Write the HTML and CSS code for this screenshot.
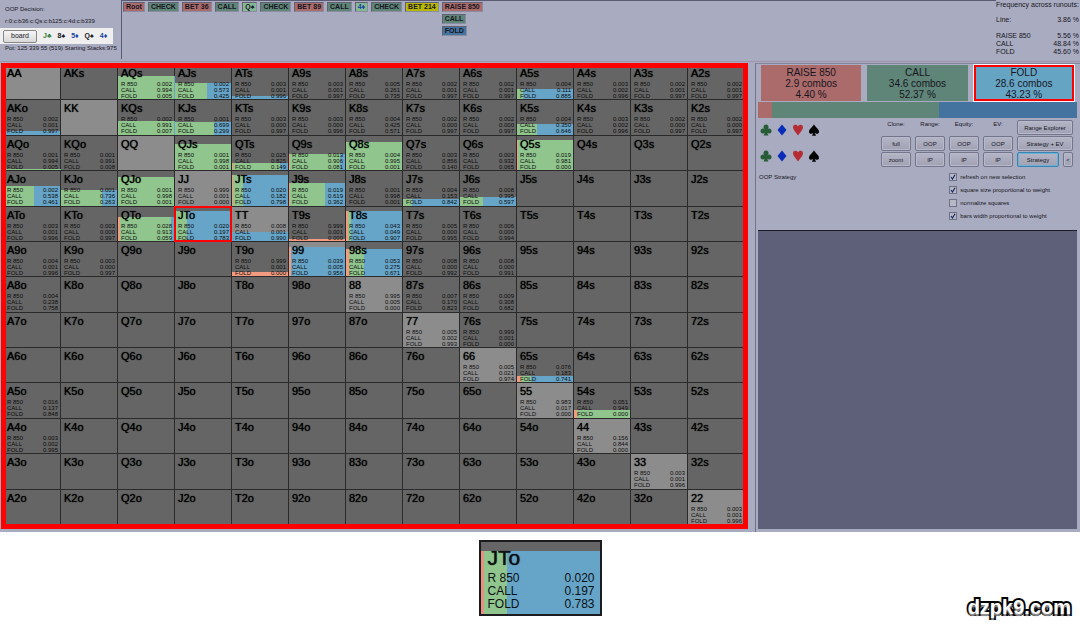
FILE: index.html
```html
<!DOCTYPE html>
<html lang="en">
<head>
<meta charset="utf-8">
<title>OOP Strategy</title>
<link rel="stylesheet" href="styles.css">
</head>
<body>
<svg class="defs" aria-hidden="true">
  <symbol id="club" viewBox="0 0 12 12"><circle cx="6" cy="3" r="2.5"/><circle cx="3" cy="7" r="2.5"/><circle cx="9" cy="7" r="2.5"/><path d="M5 5h2l.3 4L8.500 11.500H3.500L4.700 9z"/></symbol>
  <symbol id="diamond" viewBox="0 0 12 12"><path d="M6 0.500L10.500 6 6 11.500 1.500 6z"/></symbol>
  <symbol id="heart" viewBox="0 0 12 12"><path d="M6 11.500C4 8.500 1 6 1 3.300 1 .4 5 0 6 2.600 7 0 11 .4 11 3.300 11 6 8 8.500 6 11.500z"/></symbol>
  <symbol id="spade" viewBox="0 0 12 12"><path d="M6 .3C7 2.800 11 5 11 7.700c0 2.400-3 2.800-4.300 1L8 11.700H4L5.300 8.700C4 10.500 1 10.100 1 7.700 1 5 5 2.800 6 .3z"/></symbol>
</svg>
<div class="app">
  <header class="top">
    <section class="decision">
      <p>OOP Decision:</p>
      <p class="path">r:0:c:b36:c:Qs:c:b125:c:4d:c:b339</p>
      <div class="cards">
        <button type="button" class="btn">board</button>
        <span class="green">J♣</span><span>8♠</span><span class="blue">5♦</span><span>Q♠</span><span class="blue">4♦</span>
      </div>
      <p>Pot: 125 339 55 (519) Starting Stacks:975</p>
    </section>
    <nav class="line">
      <button type="button" class="tag raise">Root</button>
      <button type="button" class="tag call">CHECK</button>
      <button type="button" class="tag raise">BET 36</button>
      <button type="button" class="tag call">CALL</button>
      <button type="button" class="tag card">Q♠</button>
      <button type="button" class="tag call">CHECK</button>
      <button type="button" class="tag raise">BET 89</button>
      <button type="button" class="tag call">CALL</button>
      <button type="button" class="tag card blue">4♦</button>
      <button type="button" class="tag call">CHECK</button>
      <button type="button" class="tag current">BET 214</button>
      <div class="options">
        <button type="button" class="tag raise">RAISE 850</button>
        <button type="button" class="tag call">CALL</button>
        <button type="button" class="tag fold">FOLD</button>
      </div>
    </nav>
    <section class="freq">
      <p>Frequency across runouts:</p>
      <dl>
        <div class="lead"><dt>Line:</dt><dd>3.86 %</dd></div>
        <div><dt>RAISE 850</dt><dd>5.56 %</dd></div>
        <div><dt>CALL</dt><dd>48.84 %</dd></div>
        <div><dt>FOLD</dt><dd>45.60 %</dd></div>
      </dl>
    </section>
  </header>
  <main class="main">
    <div class="board"><div class="matrix" id="matrix"></div></div>
    <aside class="side">
      <div class="actions">
        <button type="button" class="action raise">RAISE 850<br>2.9 combos<br>4.40 %</button>
        <button type="button" class="action call">CALL<br>34.6 combos<br>52.37 %</button>
        <button type="button" class="action chosen">FOLD<br>28.6 combos<br>43.23 %</button>
      </div>
      <div class="split"><i class="raise" style="width:4.40%"></i><i class="call" style="width:52.37%"></i><i class="fold" style="width:43.23%"></i></div>
      <div class="tools">
        <div class="suits">
          <svg class="s-club"><use href="#club"/></svg><svg class="s-diamond"><use href="#diamond"/></svg><svg class="s-heart"><use href="#heart"/></svg><svg><use href="#spade"/></svg>
          <svg class="s-club"><use href="#club"/></svg><svg class="s-diamond"><use href="#diamond"/></svg><svg class="s-heart"><use href="#heart"/></svg><svg><use href="#spade"/></svg>
        </div>
        <div class="controls">
          <span>Clone:</span><span>Range:</span><span>Equity:</span><span>EV:</span>
          <button type="button" class="btn wide">Range Explorer</button>
          <button type="button" class="btn">full</button><button type="button" class="btn">OOP</button><button type="button" class="btn">OOP</button><button type="button" class="btn">OOP</button>
          <button type="button" class="btn wide">Strategy + EV</button>
          <button type="button" class="btn">zoom</button><button type="button" class="btn">IP</button><button type="button" class="btn">IP</button><button type="button" class="btn">IP</button>
          <button type="button" class="btn active">Strategy</button><button type="button" class="btn">&lt;</button>
        </div>
      </div>
      <div class="settings">
        <p>OOP Strategy</p>
        <div class="checks">
          <label><input type="checkbox" checked>refresh on new selection</label>
          <label><input type="checkbox" checked>square size proportional to weight</label>
          <label><input type="checkbox">normalize squares</label>
          <label><input type="checkbox" checked>bars width proportional to weight</label>
        </div>
      </div>
      <div class="detail"></div>
    </aside>
  </main>
</div>
<footer class="foot">
  <div class="zoomed">
    <strong>JTo</strong>
    <dl>
      <div><dt>R 850</dt><dd>0.020</dd></div>
      <div><dt>CALL</dt><dd>0.197</dd></div>
      <div><dt>FOLD</dt><dd>0.783</dd></div>
    </dl>
  </div>
  <span class="site">dzpk9.com</span>
</footer>
<script src="matrix.js"></script>
</body>
</html>
```

FILE: styles.css
```css
* { box-sizing: border-box; }
body, p, dl, dd { margin: 0; }
body {
  min-height: 100vh;
  display: flex;
  flex-direction: column;
  background: #fff;
  color: #16161e;
  font-family: "Liberation Sans", Arial, sans-serif;
  font-size: 6px;
  line-height: 8px;
}
button { font: inherit; color: inherit; padding: 0; margin: 0; border: 0; }
.defs { position: absolute; width: 0; height: 0; }
.app { background: #a9abc0; }
.raise { background: #ab6b6b; }
.call { background: #5f8478; }
.fold { background: #45739f; }
.green { color: #3a8040; }
.blue { color: #1240a0; }

.btn {
  height: 15px;
  border: 1px solid #73768a;
  border-radius: 2px;
  background: linear-gradient(#b4b6c6, #a0a2b4);
  box-shadow: inset 0 0 0 1px #b8bacb;
}
.btn.active { border-color: #3585b5; box-shadow: inset 0 0 0 1px #6fb0d4; }

.top {
  display: grid;
  grid-template-columns: 121px 1fr 84px;
  height: 62px;
  border-bottom: 1px solid #9a95aa;
}
.decision { display: flex; flex-direction: column; gap: 4px; padding-top: 5px; }
.decision p { padding-left: 5px; white-space: nowrap; }
.decision .path { margin-bottom: -1px; }
.cards {
  display: flex;
  align-items: center;
  gap: 6px;
  width: 113px;
  height: 16px;
  margin-bottom: -4px;
  padding-left: 3px;
  background: #efefef;
  font-size: 7px;
  font-weight: bold;
}
.cards .btn {
  width: 34px;
  height: 13px;
  font-size: 7px;
  font-weight: normal;
  border-color: #888;
  background: linear-gradient(#f6f6f6, #d8d8d8);
  box-shadow: none;
}
.line {
  display: flex;
  align-items: flex-start;
  gap: 3px;
  padding: 1px;
  border-left: 1px solid #5a5b72;
  border-top: 1px solid #5a5b72;
  margin-bottom: 2px;
}
.options { display: flex; flex-direction: column; align-items: flex-start; gap: 2px; }
.tag {
  height: 10px;
  padding: 0 2px;
  border: 1px solid #8a8ca0;
  border-top-color: #606274;
  border-left-color: #606274;
  font-size: 7px;
  font-weight: bold;
  line-height: 8px;
}
.tag.card { background: #86b894; }
.tag.current { background: #b9b800; }
.freq { padding: 1px 1px 0 0; font-size: 7px; white-space: nowrap; }
.freq .lead { margin: 7px 0 8px; }
.freq dl div { display: flex; justify-content: space-between; }

.main { display: grid; grid-template-columns: minmax(0, 1fr) 325px; }
.board {
  position: relative;
  height: 466px;
  margin: 1px 7px 3px 1px;
  padding: 2px 3px 4px;
}
.board::after {
  content: "";
  position: absolute;
  inset: 0;
  border: 5px solid #f00;
  pointer-events: none;
}
.matrix {
  display: grid;
  grid-template: repeat(13, 1fr) / repeat(13, 1fr);
  height: 100%;
  color: #000;
}
.cell {
  position: relative;
  padding: 2px 2px 0 3px;
  background: #656565;
  border-right: 1px solid #2a2a2a;
  border-bottom: 1px solid #2a2a2a;
  line-height: 6px;
}
.cell.pair { background: #8c8c8d; }
.cell strong, .cell dl { position: relative; }
.cell strong {
  display: block;
  margin-bottom: 2px;
  font-size: 11px;
  font-weight: normal;
  line-height: 12px;
  text-shadow: 0 0 1px #000;
}
.cell dl div, .zoomed dl div { display: flex; justify-content: space-between; }
.cell dl { color: #0c0c0c; }
.bar { position: absolute; left: 0; right: 0; bottom: 0; display: flex; }
.bar .r { background: #f29b80; }
.bar .c { background: #90c58d; }
.bar .f { background: #66a4c8; }
.cell.selected::after {
  content: "";
  position: absolute;
  inset: -1px;
  border: 2px solid #f00;
}

.side {
  display: flex;
  flex-direction: column;
  margin-top: 1px;
  padding: 1px 3px 3px 2px;
  border-left: 1px solid #72748a;
  border-top: 1px solid #82849a;
}
.actions { display: grid; grid-template-columns: 1fr 1fr 1fr; gap: 6px; padding: 0 3px 0 3px; }
.action { height: 36px; font-size: 10px; line-height: 11px; }
.chosen { background: #66a4c4; border: 2px solid #f00; outline: 1px solid #f4f4fa; }
.split { display: flex; height: 16px; margin: 1px 0 2px; }
.tools { display: flex; justify-content: space-between; padding-right: 4px; }
.suits {
  display: grid;
  grid-template-columns: repeat(4, 12px);
  grid-auto-rows: 12px;
  gap: 14px 4px;
  padding: 4px 0 0 2px;
  fill: #000;
}
.suits svg { width: 12px; height: 12px; }
.suits .s-club { fill: #285c38; }
.suits .s-diamond { fill: #0a2cb8; }
.suits .s-heart { fill: #b42c34; }
.controls {
  display: grid;
  grid-template-columns: repeat(4, 30px) 42px 10px;
  gap: 1px 4px;
  text-align: center;
}
.controls .wide { grid-column: span 2; }
.settings { display: flex; justify-content: space-between; padding: 6px 27px 0 1px; }
.checks { display: flex; flex-direction: column; gap: 5px; }
.checks label { display: flex; align-items: center; gap: 3px; }
.checks input {
  appearance: none;
  width: 8px;
  height: 8px;
  margin: 0;
  border: 1px solid #707288;
  background: #b6b8c8;
}
.checks input:checked {
  background: #b6b8c8 url("data:image/svg+xml,%3Csvg xmlns='http://www.w3.org/2000/svg' viewBox='0 0 6 6'%3E%3Cpath d='M1 3l1.500 2L5 .8' fill='none' stroke='%23182860' stroke-width='1.200'/%3E%3C/svg%3E");
}
.detail { flex: 1; margin-top: 10px; background: #5e6079; border-top: 1px solid #1c1d28; }

.foot {
  flex: 1;
  display: grid;
  grid-template-columns: 1fr 123px 1fr;
  padding: 8px 9px 9px;
}
.zoomed {
  grid-column: 2;
  align-self: start;
  height: 76px;
  padding: 6px 5px 0 7px;
  border: 2px solid #1b1b20;
  background:
    linear-gradient(#666, #666) 0 0 / 100% 9px no-repeat,
    linear-gradient(90deg, #e8907e 3px, #90c58d 3px 26px, #66a4c8 26px);
  color: #0b1116;
  font-size: 12px;
  line-height: 13px;
}
.zoomed strong {
  display: block;
  margin-bottom: 4px;
  font-size: 21px;
  font-weight: normal;
  line-height: 20px;
  text-shadow: 0 0 1px #000;
}
.site {
  align-self: end;
  justify-self: end;
  color: #fff;
  font-size: 20px;
  font-weight: bold;
  line-height: 22px;
  -webkit-text-stroke: 4px #000;
  paint-order: stroke fill;
  text-shadow: 0 2px 1px #999;
}
```

FILE: matrix.js
```js
const RANKS = "AKQJT98765432";

// hand: [raise, call, fold] in thousandths
const STRATEGY = {
  AQs: [2, 994, 5], AJs: [2, 573, 425], ATs: [3, 1, 996], A9s: [3, 1, 997], A8s: [5, 261, 735],
  A7s: [2, 1, 997], A6s: [2, 1, 997], A5s: [4, 111, 885], A4s: [3, 2, 996], A3s: [2, 1, 997], A2s: [2, 1, 997],
  AKo: [2, 1, 997], KQs: [2, 991, 7], KJs: [1, 699, 299], KTs: [3, 0, 997], K9s: [3, 0, 996], K8s: [4, 425, 571],
  K7s: [2, 0, 997], K6s: [2, 0, 997], K5s: [4, 350, 646], K4s: [3, 2, 996], K3s: [2, 0, 997], K2s: [2, 0, 997],
  AQo: [1, 994, 5], KQo: [1, 991, 8], QJs: [1, 998, 1], QTs: [25, 825, 149], Q9s: [13, 906, 81],
  Q8s: [4, 995, 1], Q7s: [3, 856, 140], Q6s: [3, 932, 65], Q5s: [19, 981, 0],
  AJo: [2, 538, 461], KJo: [1, 736, 263], QJo: [1, 998, 1], JJ: [999, 1, 0], JTs: [20, 182, 798],
  J9s: [19, 619, 362], J8s: [1, 998, 1], J7s: [4, 153, 842], J6s: [8, 395, 597],
  ATo: [3, 1, 996], KTo: [3, 0, 997], QTo: [28, 913, 59], JTo: [20, 197, 783], TT: [8, 1, 990],
  T9s: [999, 1, 0], T8s: [43, 49, 907], T7s: [5, 0, 995], T6s: [6, 0, 994],
  A9o: [4, 1, 996], K9o: [3, 0, 997], T9o: [999, 1, 0], 99: [39, 5, 956], "98s": [53, 275, 671],
  "97s": [8, 0, 992], "96s": [8, 0, 991],
  A8o: [4, 238, 758], 88: [995, 5, 0], "87s": [7, 170, 823], "86s": [9, 308, 682],
  77: [5, 2, 993], "76s": [999, 1, 0], 66: [5, 21, 974], "65s": [76, 183, 741],
  A5o: [16, 137, 848], 55: [983, 17, 0], "54s": [51, 949, 0],
  A4o: [3, 2, 995], 44: [156, 844, 0], 33: [3, 1, 996], 22: [3, 1, 996]
};

// share of the square that the hand's weight fills, in percent
const WEIGHT = {
  AQs: 67, AJs: 47, ATs: 9, A5s: 29, AKo: 10, KQs: 41, KJs: 38, K5s: 32, AQo: 3,
  QJs: 76, QTs: 21, Q9s: 47, Q8s: 83, Q5s: 88, AJo: 56, KJo: 44, QJo: 83, JTs: 88, J9s: 65,
  J7s: 20, J6s: 24, QTo: 70, JTo: 88, TT: 27, T9s: 5, T8s: 88, T9o: 13, 99: 85, "98s": 80,
  "65s": 18, "54s": 24
};

const LABELS = ["R 850", "CALL", "FOLD"];
const KINDS = ["r", "c", "f"];

function handName(row, col) {
  if (row === col) return RANKS[row] + RANKS[row];
  return row < col ? RANKS[row] + RANKS[col] + "s" : RANKS[col] + RANKS[row] + "o";
}

function cellHtml(row, col) {
  const name = handName(row, col);
  const mix = STRATEGY[name];
  const classes = ["cell"];
  if (row === col) classes.push("pair");
  if (name === "JTo") classes.push("selected");
  let html = `<div class="${classes.join(" ")}">`;
  if (WEIGHT[name]) {
    const parts = mix.map((v, i) => `<i class="${KINDS[i]}" style="width:${v / 10}%"></i>`).join("");
    html += `<div class="bar" style="height:${WEIGHT[name]}%">${parts}</div>`;
  }
  html += `<strong>${name}</strong>`;
  if (mix) {
    const rows = mix.map((v, i) => `<div><dt>${LABELS[i]}</dt><dd>${(v / 1000).toFixed(3)}</dd></div>`).join("");
    html += `<dl>${rows}</dl>`;
  }
  return html + "</div>";
}

let markup = "";
for (let row = 0; row < 13; row++) {
  for (let col = 0; col < 13; col++) markup += cellHtml(row, col);
}
document.getElementById("matrix").innerHTML = markup;
```
